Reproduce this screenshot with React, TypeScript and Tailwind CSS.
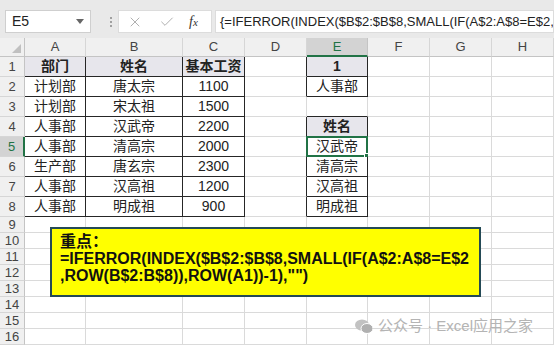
import { Check, X } from "lucide-react";

const cols = ["A", "B", "C", "D", "E", "F", "G", "H"];

type Cell = { t: string; bold?: boolean; fill?: boolean };

const data: Record<number, Record<string, Cell>> = {
  1: {
    A: { t: "部门", bold: true, fill: true },
    B: { t: "姓名", bold: true, fill: true },
    C: { t: "基本工资", bold: true, fill: true },
    E: { t: "1", bold: true, fill: true },
  },
  2: { A: { t: "计划部" }, B: { t: "唐太宗" }, C: { t: "1100" }, E: { t: "人事部" } },
  3: { A: { t: "计划部" }, B: { t: "宋太祖" }, C: { t: "1500" } },
  4: { A: { t: "人事部" }, B: { t: "汉武帝" }, C: { t: "2200" }, E: { t: "姓名", bold: true, fill: true } },
  5: { A: { t: "人事部" }, B: { t: "清高宗" }, C: { t: "2000" }, E: { t: "汉武帝" } },
  6: { A: { t: "生产部" }, B: { t: "唐玄宗" }, C: { t: "2300" }, E: { t: "清高宗" } },
  7: { A: { t: "人事部" }, B: { t: "汉高祖" }, C: { t: "1200" }, E: { t: "汉高祖" } },
  8: { A: { t: "人事部" }, B: { t: "明成祖" }, C: { t: "900" }, E: { t: "明成祖" } },
};

// cells that carry a black border
const bordered = (r: number, c: number) => {
  if (r >= 1 && r <= 8 && c >= 0 && c <= 2) return true;
  if (c === 4 && (r === 1 || r === 2)) return true;
  if (c === 4 && r >= 4 && r <= 8) return true;
  return false;
};

const rows = Array.from({ length: 16 }, (_, i) => i + 1);

const RowHeader = ({ r }: { r: number }) => {
  const sel = r === 5;
  const tall = r <= 8;
  return (
    <div
      className={`flex items-center justify-center border-b border-b-[#d6d6d6] text-[13px] ${
        tall ? "h-[20px]" : "h-[16px]"
      } ${
        sel
          ? "border-r-2 border-r-[#217346] bg-[#d3d3d3] text-[#217346]"
          : "border-r border-r-[#c4c4c4] bg-[#f0f0f0] text-[#444]"
      }`}
    >
      {r}
    </div>
  );
};

const SheetCell = ({ r, c }: { r: number; c: number }) => {
  const cell = data[r]?.[cols[c]];
  const right = bordered(r, c) || bordered(r, c + 1);
  const bottom = bordered(r, c) || bordered(r + 1, c);
  const sel = r === 5 && c === 4;
  return (
    <div
      className={`relative flex items-center justify-center border-r border-b text-[14px] text-[#222] ${
        r <= 8 ? "h-[20px]" : "h-[16px]"
      } ${right ? "border-r-[#262626]" : "border-r-[#dadada]"} ${
        bottom ? "border-b-[#262626]" : "border-b-[#dadada]"
      } ${cell?.fill ? "bg-[#e7e6ec]" : "bg-white"} ${cell?.bold ? "font-bold" : ""}`}
    >
      {cell?.t}
      {sel && (
        <div className="absolute -left-px -top-px h-[21px] w-[62px] border-2 border-[#217346]">
          <div className="absolute -bottom-[4px] -right-[4px] h-[6px] w-[6px] border border-white bg-[#217346]" />
        </div>
      )}
    </div>
  );
};

export default function App() {
  return (
    <div className="relative h-[346px] w-[554px] overflow-hidden bg-white font-['Liberation_Sans','Noto_Sans_CJK_SC',sans-serif]">
      {/* formula bar */}
      <div className="flex h-[38px] items-start bg-[#e9e9e9] pt-[10px]">
        <div className="ml-[5px] flex h-[23px] w-[86px] items-center justify-between border border-[#cfcfcf] bg-white pl-[6px] pr-[6px] text-[14px] text-[#222]">
          <span>E5</span>
          <svg width="8" height="5" viewBox="0 0 8 5">
            <path d="M0 0h8L4 5z" fill="#666" />
          </svg>
        </div>
        <div className="ml-[12px] flex h-[23px] w-[15px] flex-col items-center justify-center gap-[2px]">
          <span className="h-[2px] w-[2px] bg-[#a0a0a0]" />
          <span className="h-[2px] w-[2px] bg-[#a0a0a0]" />
          <span className="h-[2px] w-[2px] bg-[#a0a0a0]" />
        </div>
        <div className="flex h-[23px] w-[94px] items-center border border-[#dcdcdc] bg-white pl-[8px]">
          <X size={16} strokeWidth={1.5} color="#b0b0b0" />
          <Check size={16} strokeWidth={1.5} color="#b0b0b0" className="ml-[16px]" />
          <span className="ml-[14px] font-['Liberation_Serif',serif] text-[14px] italic text-[#333]">
            f<span className="text-[11px]">x</span>
          </span>
        </div>
        <div className="ml-[3px] flex h-[23px] min-w-0 flex-1 items-center overflow-hidden whitespace-nowrap border border-[#dcdcdc] bg-white pl-[4px] text-[13px] text-[#222]">
          <span className="shrink-0">{"{=IFERROR(INDEX($B$2:$B$8,SMALL(IF(A$2:A$8=E$2,RC"}</span>
        </div>
      </div>

      {/* sheet grid */}
      <div className="grid grid-cols-[25px_61px_97px_62px_62px_61px_62px_62px_62px]">
        <div className="flex h-[19px] items-end justify-end border-r border-b border-r-[#c4c4c4] border-b-[#c4c4c4] bg-[#f0f0f0] p-[3px]">
          <svg width="9" height="9" viewBox="0 0 9 9">
            <path d="M9 0V9H0z" fill="#c0c0c0" />
          </svg>
        </div>
        {cols.map((c) =>
          c === "E" ? (
            <div
              key={c}
              className="flex h-[19px] items-center justify-center border-r border-b-2 border-r-[#c4c4c4] border-b-[#217346] bg-[#d3d3d3] text-[13px] text-[#217346]"
            >
              {c}
            </div>
          ) : (
            <div
              key={c}
              className="flex h-[19px] items-center justify-center border-r border-b border-r-[#d6d6d6] border-b-[#c4c4c4] bg-[#f0f0f0] text-[13px] text-[#444]"
            >
              {c}
            </div>
          )
        )}
        {rows.map((r) => (
          <div key={r} className="contents">
            <RowHeader r={r} />
            {cols.map((_, ci) => (
              <SheetCell key={ci} r={r} c={ci} />
            ))}
          </div>
        ))}
      </div>

      {/* note shape */}
      <div className="absolute left-[50px] top-[227px] h-[70px] w-[431px] border-2 border-[#244a56] bg-[#ffff00] px-[8px] pt-[4px] text-[16px] font-bold leading-[17px] text-[#111]">
        <div>重点：</div>
        <div className="whitespace-nowrap">=IFERROR(INDEX($B$2:$B$8,SMALL(IF(A$2:A$8=E$2</div>
        <div className="whitespace-nowrap">,ROW(B$2:B$8)),ROW(A1))-1),"")</div>
      </div>

      {/* watermark */}
      <div className="absolute left-[355px] top-[315px] flex items-center gap-[5px] text-[15px] text-[#b4b4b4]">
        <svg width="18" height="15" viewBox="0 0 18 15">
          <ellipse cx="7" cy="6" rx="7" ry="5.6" fill="#c2c2c2" />
          <ellipse cx="12" cy="9.5" rx="6" ry="5" fill="#b0b0b0" stroke="#fff" strokeWidth="1" />
        </svg>
        <span>公众号 · Excel应用之家</span>
      </div>
    </div>
  );
}
